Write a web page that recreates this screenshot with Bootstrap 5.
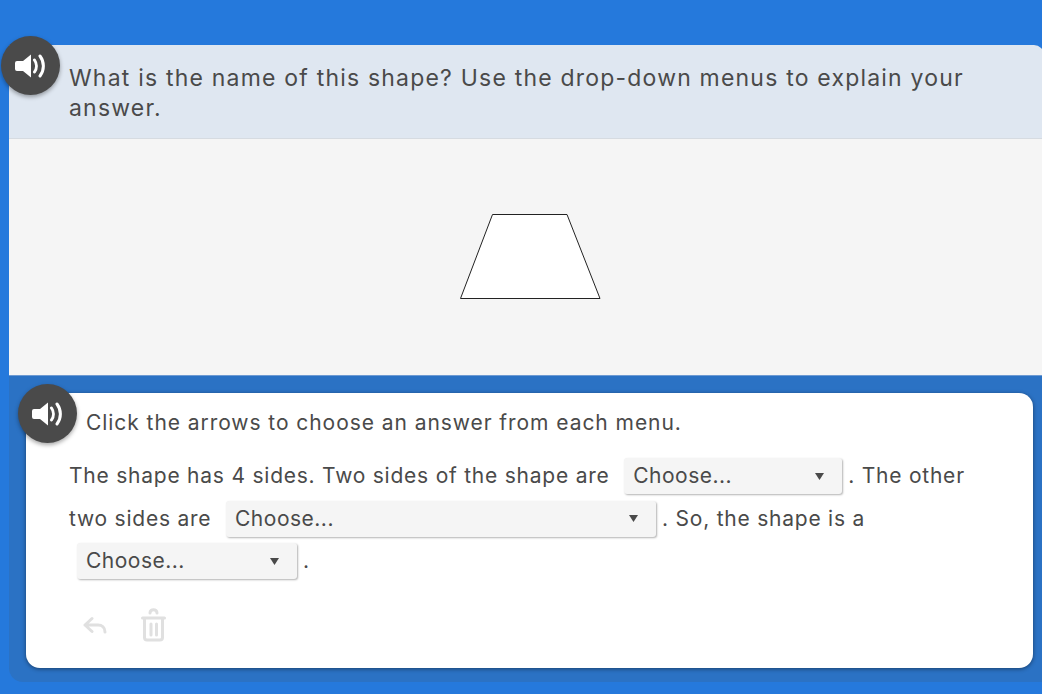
<!DOCTYPE html>
<html lang="en">
<head>
    <meta charset="UTF-8">
    <title>Shape question</title>
    <meta name="viewport" content="width=device-width, initial-scale=1">
    <link href="https://cdn.jsdelivr.net/npm/bootstrap@5.3.3/dist/css/bootstrap.min.css" rel="stylesheet">
    <style>
        html, body {
            height: 100%;
            overflow: hidden;
        }

        body {
            background: #2579dc;
            color: #4a4a4a;
            font-family: Inter, "Noto Sans", sans-serif;
            padding: 45px 0 12px 9px;
        }

        .question-panel {
            margin-right: -2px;
            height: 637px;
            position: relative;
            background: #2b72c4;
            border-radius: 0 10px 0 14px;
        }

        .question-head {
            height: 94px;
            padding: 18px 60px 0 60px;
            background: #dfe7f1;
            border-bottom: 1px solid #d6dbe1;
            border-radius: 0 10px 0 0;
            font-size: 23px;
            letter-spacing: 1.2px;
            line-height: 30px;
        }

        .shape-area {
            height: 237px;
            background: #f5f5f5;
            border-bottom: 1px solid #6d9ad2;
        }

        .answer-wrap {
            padding: 17px 11px 15px 17px;
        }

        .answer-card {
            height: 275px;
            padding: 15px 43px 0;
            background: #fff;
            border-radius: 14px;
            box-shadow: 0 1px 4px rgba(0, 0, 0, .45);
            font-size: 21px;
            letter-spacing: .94px;
        }

        .answer-hint {
            margin: 0 0 0 17px;
            line-height: 30px;
        }

        .answer-text {
            margin: 17px 0 0;
            letter-spacing: .77px;
            line-height: 42.5px;
        }

        .answer-text .form-select {
            display: inline-block;
            height: 36px;
            margin: 0 6px 0 8px;
            padding: 0 0 0 9px;
            vertical-align: baseline;
            color: #4a4a4a;
            font-size: 21px;
            letter-spacing: .5px;
            line-height: 34px;
            background-color: #f5f5f5;
            background-size: 9px 7px;
            background-position: right 18px center;
            background-image: url("data:image/svg+xml,%3csvg xmlns='http://www.w3.org/2000/svg' viewBox='0 0 9 7'%3e%3cpath fill='%234a4a4a' d='M0 0h9L4.500 7z'/%3e%3c/svg%3e");
            border: 0;
            border-radius: 3px;
            box-shadow: 1px 1px 2px rgba(0, 0, 0, .3);
        }

        .select-short { width: 218px; }
        .select-long { width: 430px; }
        .select-third { width: 220px; }

        .audio-btn {
            position: absolute;
            width: 59px;
            height: 59px;
            padding: 0;
            border: 0;
            border-radius: 50%;
            background: #4a4a4a;
            box-shadow: 0 2px 4px rgba(0, 0, 0, .35);
        }

        .audio-top { left: -8px; top: -9px; }
        .audio-bottom { left: 9px; top: 339px; }

        .tool-row {
            gap: 34px;
            margin: 25px 0 0 14px;
        }

        .tool-btn {
            padding: 0;
            border: 0;
            background: none;
            line-height: 0;
        }
    </style>
</head>

<body>
    <main class="question-panel">
        <button class="audio-btn audio-top d-flex align-items-center justify-content-center" aria-label="Listen to question">
            <svg width="32" height="24" viewBox="0 0 32 24"><path fill="#fff" d="M2 7h6l8-6.500v23L8 17H2a2 2 0 0 1-2-2V9a2 2 0 0 1 2-2z"/><path fill="none" stroke="#fff" stroke-width="3" stroke-linecap="round" d="M19.500 6c2.500 3.500 2.500 8.500 0 12M25 2c4.500 6 4.500 14 0 20"/></svg>
        </button>

        <div class="question-head">What is the name of this shape? Use the drop-down menus to explain your answer.</div>

        <div class="shape-area d-flex align-items-center justify-content-center">
            <svg width="149" height="86" viewBox="0 0 149 86"><path fill="#fff" stroke="#222" d="M40.500 .5h74.500l33 84H8.500z"/></svg>
        </div>

        <div class="answer-wrap">
            <button class="audio-btn audio-bottom d-flex align-items-center justify-content-center" aria-label="Listen to directions">
                <svg width="32" height="24" viewBox="0 0 32 24"><path fill="#fff" d="M2 7h6l8-6.500v23L8 17H2a2 2 0 0 1-2-2V9a2 2 0 0 1 2-2z"/><path fill="none" stroke="#fff" stroke-width="3" stroke-linecap="round" d="M19.500 6c2.500 3.500 2.500 8.500 0 12M25 2c4.500 6 4.500 14 0 20"/></svg>
            </button>

            <section class="answer-card">
                <p class="answer-hint">Click the arrows to choose an answer from each menu.</p>
                <p class="answer-text">The shape has 4 sides. Two sides of the shape are
                    <select class="form-select select-short"><option>Choose...</option><option>parallel</option><option>perpendicular</option></select>. The other two sides are
                    <select class="form-select select-long"><option>Choose...</option><option>not parallel</option><option>the same length</option></select>. So, the shape is a
                    <select class="form-select select-third"><option>Choose...</option><option>trapezoid</option><option>rectangle</option></select>.</p>

                <div class="tool-row d-flex align-items-center">
                    <button class="tool-btn" aria-label="Undo">
                        <svg width="24" height="18" viewBox="0 0 24 18"><path fill="none" stroke="#e0e0e0" stroke-width="3" stroke-linecap="round" stroke-linejoin="round" d="M9 2.500 2 9l7 6.500M2 9h13c4 0 7 2.500 7 7"/></svg>
                    </button>
                    <button class="tool-btn" aria-label="Delete">
                        <svg width="25" height="34" viewBox="0 0 25 34"><g fill="none" stroke="#e0e0e0" stroke-width="3" stroke-linecap="round" stroke-linejoin="round"><path d="M1.500 10h22M3.500 10v19.500c0 1.500 1 2.500 2.500 2.500h13c1.500 0 2.500-1 2.500-2.500V10M9 5c0-4.500 7-4.500 7 0M10 16v11M15.500 16v11"/></g></svg>
                    </button>
                </div>
            </section>
        </div>
    </main>
</body>
</html>
